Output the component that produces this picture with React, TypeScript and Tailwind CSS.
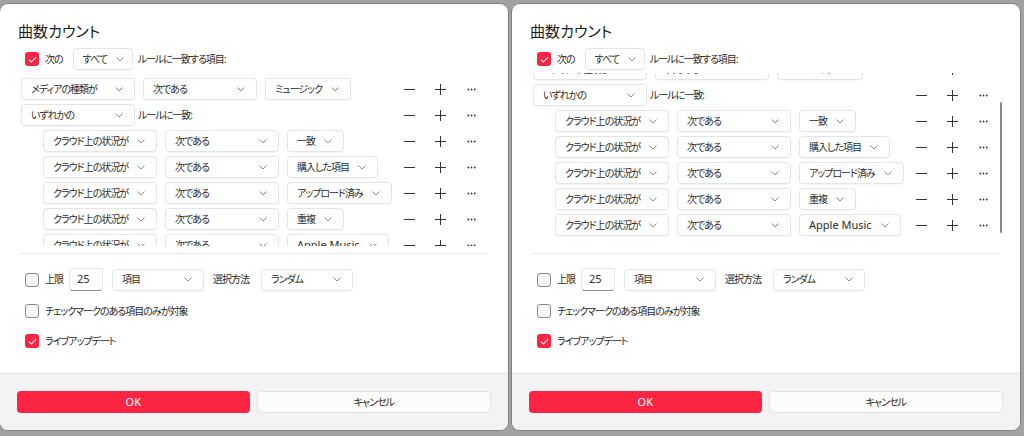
import React from "react";

const Chevron = () => (
  <svg width="8" height="5" viewBox="0 0 8 5" className="shrink-0">
    <path d="M0.5 0.5 L4 4 L7.5 0.5" fill="none" stroke="#8a8a8a" strokeWidth="1" />
  </svg>
);

const Check = ({ checked }: { checked?: boolean }) =>
  checked ? (
    <div className="flex h-[14px] w-[14px] shrink-0 items-center justify-center rounded-[3px] bg-[#fa2542]">
      <svg width="9" height="7" viewBox="0 0 9 7">
        <path d="M1 3.6 L3.4 6 L8 1" fill="none" stroke="#fff" strokeWidth="1.1" />
      </svg>
    </div>
  ) : (
    <div className="h-[14px] w-[14px] shrink-0 rounded-[3px] border border-[#8d8d8d] bg-[#f6f6f6]" />
  );

const Select = ({ label, className, latin }: { label: string; className?: string; latin?: boolean }) => (
  <div
    className={`flex h-[22px] shrink-0 items-center justify-between gap-[9px] rounded-[4px] border border-[#e4e4e4] bg-white pl-[9px] pr-[11px] text-[#2b2b2b] shadow-[0_1px_1px_rgba(0,0,0,0.04)] ${className ?? ""}`}
  >
    <span className={`whitespace-nowrap ${latin ? "text-[11px] tracking-normal" : ""}`}>{label}</span>
    <Chevron />
  </div>
);

const Actions = () => (
  <div className="ml-auto flex h-[22px] shrink-0 items-center">
    <div className="flex w-[31px] items-center justify-center">
      <svg width="11" height="11" viewBox="0 0 11 11">
        <path d="M0 5.5 H11" stroke="#333" strokeWidth="1" />
      </svg>
    </div>
    <div className="flex w-[31px] items-center justify-center">
      <svg width="11" height="11" viewBox="0 0 11 11">
        <path d="M0 5.5 H11 M5.5 0 V11" stroke="#333" strokeWidth="1" />
      </svg>
    </div>
    <div className="flex w-[31px] items-center justify-center">
      <svg width="9" height="3" viewBox="0 0 9 3">
        <circle cx="1.3" cy="1.5" r="0.9" fill="#333" />
        <circle cx="4.5" cy="1.5" r="0.9" fill="#333" />
        <circle cx="7.7" cy="1.5" r="0.9" fill="#333" />
      </svg>
    </div>
  </div>
);

const RuleRow = ({ a, b, c, nested }: { a: string; b: string; c: string; nested?: boolean }) => (
  <div className={`flex h-[22px] items-center ${nested ? "pl-[22px]" : ""}`}>
    <Select label={a} className="w-[114px]" />
    <Select label={b} className="ml-[8px] w-[114px]" />
    <Select label={c} className="ml-[8px]" latin={c === "Apple Music"} />
    <Actions />
  </div>
);

const cloudValues = ["一致", "購入した項目", "アップロード済み", "重複", "Apple Music"];

const Dialog = ({ scrolled }: { scrolled?: boolean }) => (
  <div className="flex h-[426px] w-[508px] shrink-0 flex-col overflow-hidden rounded-[8px] bg-white text-[10px] tracking-[-1px] text-[#1f1f1f] shadow-[0_0_0_1px_rgba(0,0,0,0.2)] [font-feature-settings:'palt']">
    <div className="mt-[17px] h-[20px] px-[18px] text-[15px] leading-[20px] tracking-normal text-[#1a1a1a]">曲数カウント</div>

    <div className="mt-[7px] flex h-[22px] items-center px-[25px]">
      <Check checked />
      <span className="ml-[6px]">次の</span>
      <Select label="すべて" className="ml-[10px] w-[60px]" />
      <span className="ml-[5px]">ルールに一致する項目:</span>
    </div>

    <div className="relative mt-[3px] h-[173px] overflow-hidden px-[21px]">
      <div className={`flex flex-col gap-[4px] pt-[5px] ${scrolled ? "-mt-[20px]" : ""}`}>
        <RuleRow a="メディアの種類が" b="次である" c="ミュージック" />
        <div className="flex h-[22px] items-center">
          <Select label="いずれかの" className="w-[114px]" />
          <span className="ml-[3px]">ルールに一致:</span>
          <Actions />
        </div>
        {cloudValues.map((v) => (
          <RuleRow key={v} a="クラウド上の状況が" b="次である" c={v} nested />
        ))}
      </div>
      {scrolled && (
        <div className="absolute right-[18px] top-[29px] h-[131px] w-[2px] rounded-full bg-[#8b8b8b]" />
      )}
    </div>

    <div className="mx-[20px] mt-[7px] h-px bg-[#ececec]" />

    <div className="mt-[14px] flex h-[23px] items-center px-[25px]">
      <Check />
      <span className="ml-[6px]">上限</span>
      <div className="ml-[6px] flex h-[23px] w-[34px] items-center rounded-[4px] border border-[#e4e4e4] border-b-[#8a8a8a] pl-[7px] text-[11px] tracking-normal text-[#2b2b2b]">
        25
      </div>
      <Select label="項目" className="ml-[9px] w-[92px]" />
      <span className="ml-[9px]">選択方法</span>
      <Select label="ランダム" className="ml-[12px] w-[92px]" />
    </div>

    <div className="mt-[13px] flex h-[14px] items-center px-[25px]">
      <Check />
      <span className="ml-[6px]">チェックマークのある項目のみが対象</span>
    </div>

    <div className="mt-[16px] flex h-[14px] items-center px-[25px]">
      <Check checked />
      <span className="ml-[6px]">ライブアップデート</span>
    </div>

    <div className="mt-auto flex h-[57px] gap-[7px] border-t border-[#e8e8e8] bg-[#f3f3f3] px-[17px] pt-[17px]">
      <div className="flex h-[22px] flex-1 items-center justify-center rounded-[4px] bg-[#fa2542] text-[11px] tracking-normal text-white">
        OK
      </div>
      <div className="flex h-[22px] flex-1 items-center justify-center rounded-[4px] border border-[#e3e3e3] bg-[#fbfbfb] text-[#1f1f1f]">
        キャンセル
      </div>
    </div>
  </div>
);

export default function App() {
  return (
    <div className="h-[436px] w-[1024px] overflow-hidden bg-[#a2a2a2] font-['Noto_Sans','Noto_Sans_CJK_JP',sans-serif]">
      <div className="flex gap-[4px] pt-[4px]">
        <Dialog />
        <Dialog scrolled />
      </div>
    </div>
  );
}
